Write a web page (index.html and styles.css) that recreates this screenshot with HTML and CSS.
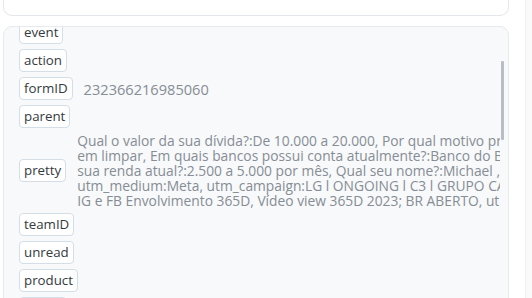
FILE: index.html
```html
<!DOCTYPE html>
<html lang="pt">
<head>
<meta charset="utf-8">
<title>Detalhes</title>
<link rel="stylesheet" href="styles.css">
</head>
<body>
<div class="page">
  <div class="main">
    <div class="top-card"></div>
    <div class="fields-card">
      <div class="fields-scroll">
        <div class="fields">
          <div class="row"><span class="key">event</span></div>
          <div class="row"><span class="key">action</span></div>
          <div class="row"><span class="key">formID</span><span class="val">232366216985060</span></div>
          <div class="row"><span class="key">parent</span></div>
          <div class="row"><span class="key">pretty</span>
            <div class="val multi">
              <span class="line">Qual o valor da sua dívida?:De 10.000 a 20.000, Por qual motivo precisa de ajuda para ficar com o nome</span>
              <span class="line">em limpar, Em quais bancos possui conta atualmente?:Banco do Brasil, Nubank, Qual é a</span>
              <span class="line">sua renda atual?:2.500 a 5.000 por mês, Qual seu nome?:Michael , utm_source:facebook,</span>
              <span class="line">utm_medium:Meta, utm_campaign:LG l ONGOING l C3 l GRUPO CASA LIMPA l Público</span>
              <span class="line">IG e FB Envolvimento 365D, Vídeo view 365D 2023; BR ABERTO, utm_content:AD 01</span>
            </div>
          </div>
          <div class="row"><span class="key">teamID</span></div>
          <div class="row"><span class="key">unread</span></div>
          <div class="row"><span class="key">product</span></div>
          <div class="row"><span class="key">status</span></div>
        </div>
      </div>
      <div class="vbar"><div class="thumb"></div></div>
    </div>
  </div>
  <div class="page-bar"></div>
</div>
</body>
</html>
```
FILE: styles.css
```css
html, body {
  margin: 0;
  padding: 0;
  background: #ffffff;
  font-family: "Open Sans", "Noto Sans", sans-serif;
  overflow: hidden;
}
.page {
  display: flex;
  height: 298px;
}
.main {
  width: 506px;
  padding-left: 3px;
  display: flex;
  flex-direction: column;
}
.top-card {
  margin-top: -10px;
  border: 1px solid #e3e6ea;
  border-radius: 0 0 9px 9px;
  background: #ffffff;
  flex: none;
  height: 24px;
}
.fields-card {
  margin-top: 10px;
  height: 300px;
  flex: none;
  border: 1px solid #e6e9ed;
  border-radius: 9px 9px 0 0;
  background: #f8f9fb;
  display: flex;
  overflow: hidden;
}
.fields-scroll {
  flex: 1;
  overflow: hidden;
  padding-left: 15px;
}
.fields {
  margin-top: -6px;
  display: flex;
  flex-direction: column;
  gap: 5px;
}
.row {
  display: flex;
  align-items: center;
  gap: 11px;
}
.key {
  flex: none;
  height: 21px;
  line-height: 21px;
  padding: 0 4px;
  border: 1px solid #d3dee6;
  border-radius: 4px;
  background: #ffffff;
  color: #343a40;
  font-size: 13.3px;
}
.val {
  color: #868d94;
  font-size: 14.6px;
  white-space: nowrap;
}
.multi {
  display: flex;
  flex-direction: column;
  font-size: 13.8px;
  line-height: 15px;
}
.line {
  display: block;
  white-space: nowrap;
}
.vbar {
  width: 8px;
  flex: none;
}
.thumb {
  margin-top: 34px;
  margin-left: 1px;
  width: 3px;
  height: 79px;
  background: #b9bdc5;
  border-radius: 1px;
}
.page-bar {
  flex: 1;
  display: flex;
  justify-content: flex-end;
}
.page-bar::after {
  content: "";
  width: 6px;
  background: #fafafa;
  border-left: 1px solid #f1f1f1;
}
```
